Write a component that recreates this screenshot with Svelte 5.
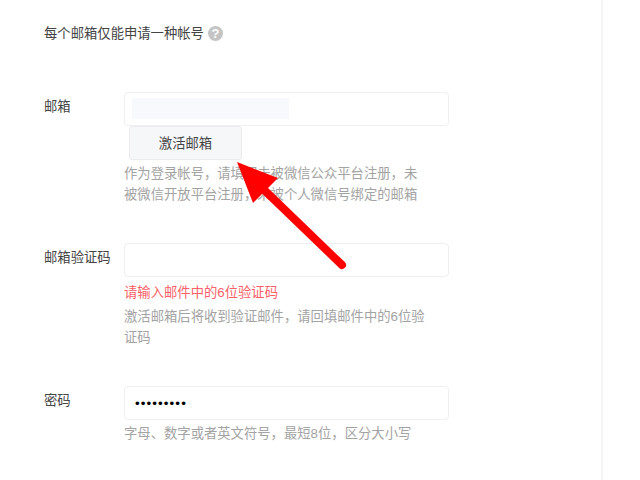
<script>
  // Form rows, top to bottom
  const rows = [
    {
      label: '邮箱',
      masked: true,
      action: '激活邮箱',
      help: '作为登录帐号，请填写未被微信公众平台注册，未被微信开放平台注册，未被个人微信号绑定的邮箱'
    },
    {
      label: '邮箱验证码',
      error: '请输入邮件中的6位验证码',
      help: '激活邮箱后将收到验证邮件，请回填邮件中的6位验证码'
    },
    {
      label: '密码',
      type: 'password',
      value: '123456789',
      help: '字母、数字或者英文符号，最短8位，区分大小写'
    }
  ];
</script>

<div class="page">
  <main class="form">
    <p class="notice">
      每个邮箱仅能申请一种帐号
      <span class="tip">?</span>
    </p>

    {#each rows as row}
      <div class="row">
        <span class="label">{row.label}</span>
        <div class="field">
          <div class="input-wrap">
            <input
              class="input"
              class:secret={row.type === 'password'}
              type={row.type ?? 'text'}
              value={row.value ?? ''}
              aria-label={row.label}
            />
            {#if row.masked}
              <div class="mask"></div>
            {/if}
          </div>
          {#if row.action}
            <button class="action">{row.action}</button>
          {/if}
          {#if row.error}
            <p class="error">{row.error}</p>
          {/if}
          <p class="help">{row.help}</p>
        </div>
      </div>
    {/each}
  </main>

  <!-- Annotation arrow drawn over the form -->
  <svg class="arrow" width="640" height="480" viewBox="0 0 640 480">
    <line x1="342" y1="265" x2="258" y2="184" stroke="#ff0000" stroke-width="8" stroke-linecap="round" />
    <polygon points="237,162 278,178 253,203" fill="#ff0000" />
  </svg>
</div>

<style>
  :global(body) {
    background: #fff;
    overflow: hidden;
  }

  .page {
    position: relative;
    width: 640px;
    height: 480px;
    overflow: hidden;
    font-family: "Liberation Sans", "Noto Sans CJK SC", sans-serif;
    font-size: 13.33px;
    line-height: 21px;
    color: #444;
  }

  .form {
    box-sizing: border-box;
    width: 603px;
    height: 480px;
    padding: 23px 0 0 44px;
    border-right: 2px solid #f4f4f4;
  }

  .notice {
    display: flex;
    align-items: center;
    gap: 4px;
    margin: 0 0 48px;
  }

  .tip {
    width: 15px;
    height: 15px;
    border-radius: 50%;
    background: #c4c4c4;
    color: #fff;
    font-size: 13px;
    font-weight: 700;
    line-height: 15px;
    text-align: center;
  }

  .row {
    display: flex;
    margin-bottom: 38px;
  }

  .row:last-child {
    margin-bottom: 0;
  }

  .label {
    flex-shrink: 0;
    width: 80px;
    padding-top: 4px;
  }

  .field {
    width: 325px;
  }

  .input-wrap {
    position: relative;
  }

  .input {
    display: block;
    box-sizing: border-box;
    width: 100%;
    height: 34px;
    padding: 0 10px;
    border: 1px solid #efeff1;
    border-radius: 4px;
    background: #fff;
    font-family: inherit;
    font-size: 13.33px;
    color: #000;
    outline: none;
  }

  .secret {
    letter-spacing: 1.1px;
  }

  .mask {
    position: absolute;
    top: 6px;
    left: 8px;
    width: 157px;
    height: 21px;
    background: #f8f9fc;
  }

  .action {
    display: block;
    box-sizing: border-box;
    width: 113px;
    height: 34px;
    margin-left: 5px;
    padding: 0 0 2px;
    border: 1px solid #ebebed;
    border-radius: 3px;
    background: #f6f7f9;
    font-family: inherit;
    font-size: 13.33px;
    color: #444;
  }

  .error {
    margin: 5px 0 0;
    color: #fb6068;
  }

  .help {
    width: 302px;
    margin: 3px 0 0;
    color: #a3a3a3;
  }

  .arrow {
    position: absolute;
    top: 0;
    left: 0;
    pointer-events: none;
  }
</style>
